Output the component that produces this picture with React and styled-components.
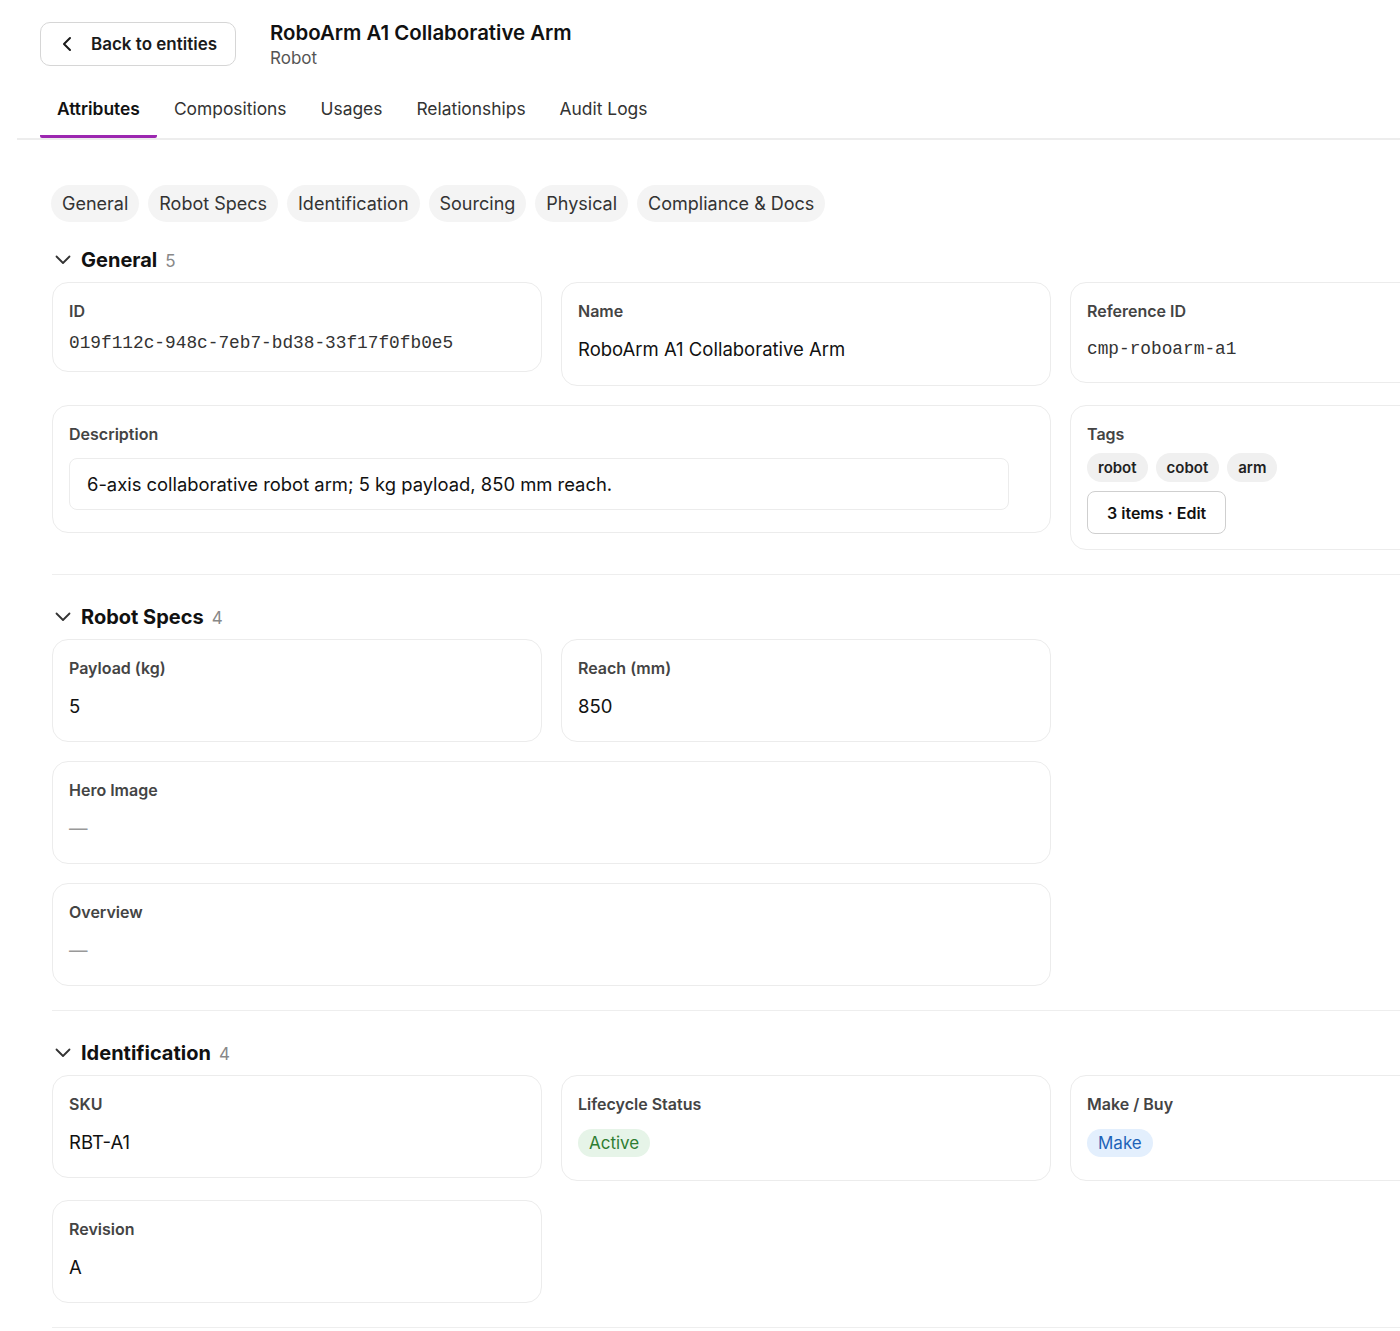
import React, { useState } from "react";
import styled, { createGlobalStyle } from "styled-components";
import { ChevronLeft } from "lucide-react";

const GlobalStyle = createGlobalStyle`
  body {
    margin: 0;
    background: #fff;
    font-family: Inter, "Noto Sans", sans-serif;
    color: #1a1a1a;
    overflow-x: hidden;
  }
  * { box-sizing: border-box; }
`;

const tabs = ["Attributes", "Compositions", "Usages", "Relationships", "Audit Logs"];
const groups = ["General", "Robot Specs", "Identification", "Sourcing", "Physical", "Compliance & Docs"];

const Page = styled.div`
  padding: 22px 0 0 40px;
`;

const Header = styled.header`
  display: flex;
  align-items: flex-start;
  gap: 34px;
`;

const BackButton = styled.button`
  display: flex;
  align-items: center;
  gap: 12px;
  height: 44px;
  padding: 0 18px 0 14px;
  border: 1px solid #d6d6d6;
  border-radius: 10px;
  background: #fff;
  font-family: inherit;
  font-size: 17px;
  font-weight: 600;
  color: #1a1a1a;
  cursor: pointer;
`;

const TitleBlock = styled.div`
  margin-top: -1px;
`;

const Title = styled.h1`
  margin: 0;
  font-size: 20.4px;
  line-height: 24px;
  font-weight: 600;
  color: #111;
`;

const Subtitle = styled.div`
  margin-top: 1px;
  font-size: 17px;
  line-height: 24px;
  color: #555;
`;

const TabBar = styled.nav`
  display: flex;
  margin: 14px 0 0 -23px;
  padding-left: 23px;
  border-bottom: 2px solid #ededed;
`;

const Tab = styled.button`
  padding: 14px 17px 15px;
  border: 0;
  border-bottom: 3px solid ${(p) => (p.$active ? "#9c27b0" : "transparent")};
  border-radius: 2px;
  background: none;
  font-family: inherit;
  font-size: 17.4px;
  line-height: 22px;
  font-weight: ${(p) => (p.$active ? 600 : 400)};
  color: ${(p) => (p.$active ? "#111" : "#333")};
  cursor: pointer;
`;

const Content = styled.div`
  padding: 45px 0 0 12px;
`;

const GroupNav = styled.div`
  display: flex;
  gap: 9px;
  margin-left: -1px;
`;

const GroupPill = styled.button`
  height: 37px;
  padding: 0 11px;
  border: 0;
  border-radius: 19px;
  background: #f4f4f4;
  font-family: inherit;
  font-size: 18px;
  color: #333;
  cursor: pointer;
`;

const Section = styled.section`
  margin-top: ${(p) => (p.$first ? "24px" : "28px")};
`;

const SectionHead = styled.div`
  display: flex;
  align-items: center;
  gap: 10px;
  height: 28px;
  margin-bottom: 8px;
  padding-left: 3px;
  svg { color: #333; }
`;

const SectionTitle = styled.h2`
  margin: 0;
  font-size: 20px;
  font-weight: 700;
  color: #111;
  span {
    margin-left: 8px;
    font-size: 17px;
    font-weight: 400;
    color: #888;
  }
`;

const Grid = styled.div`
  display: grid;
  grid-template-columns: repeat(3, 490px);
  gap: 19px;
  align-items: start;
`;

const Card = styled.div`
  grid-column: span ${(p) => p.$span || 1};
  padding: 18px 16px ${(p) => p.$pb || 21}px;
  border: 1px solid #ececec;
  border-radius: 16px;
  background: #fff;
`;

const Label = styled.div`
  font-size: 16px;
  line-height: 20px;
  font-weight: 600;
  color: #444;
`;

const Value = styled.div`
  margin-top: 14px;
  font-size: 18.5px;
  line-height: 28px;
  color: ${(p) => (p.$empty ? "#999" : "#111")};
`;

const Mono = styled.div`
  margin-top: ${(p) => p.$mt}px;
  font-family: "Liberation Mono", "DejaVu Sans Mono", monospace;
  font-size: 17.8px;
  line-height: ${(p) => p.$lh}px;
  color: #333;
`;

const TextBox = styled.div`
  width: calc(100% - 25px);
  margin-top: 14px;
  padding: 0 17px;
  height: 52px;
  display: flex;
  align-items: center;
  border: 1px solid #ececec;
  border-radius: 8px;
  font-size: 18.4px;
  color: #111;
`;

const ChipRow = styled.div`
  display: flex;
  gap: 8px;
  margin-top: 9px;
`;

const Chip = styled.span`
  height: 29px;
  padding: 0 11px;
  display: inline-flex;
  align-items: center;
  border-radius: 15px;
  background: #f0f0f0;
  font-size: 15px;
  font-weight: 600;
  color: #222;
`;

const EditButton = styled.button`
  margin-top: 9px;
  height: 43px;
  padding: 0 19px;
  border: 1px solid #cfcfcf;
  border-radius: 8px;
  background: #fff;
  font-family: inherit;
  font-size: 16px;
  font-weight: 600;
  color: #111;
`;

const BadgeRow = styled.div`
  display: flex;
  margin-top: 15px;
`;

const Badge = styled.span`
  display: inline-flex;
  align-items: center;
  height: 28px;
  padding: 0 11px;
  border-radius: 14px;
  font-size: 17px;
  background: ${(p) => (p.$tone === "green" ? "#e6f4e8" : "#e3effd")};
  color: ${(p) => (p.$tone === "green" ? "#2e7d32" : "#1e63b8")};
`;

const Divider = styled.hr`
  margin: 24px 0 0;
  border: 0;
  border-top: 1px solid #eeeeee;
  width: 1400px;
`;

function Chevron() {
  return (
    <svg width="16" height="10" viewBox="0 0 16 10" fill="none">
      <polyline
        points="1.5,1.5 8,8 14.5,1.5"
        stroke="currentColor"
        strokeWidth="1.8"
        strokeLinecap="round"
        strokeLinejoin="round"
      />
    </svg>
  );
}

function Field({ label, children, span, pb }) {
  return (
    <Card $span={span} $pb={pb}>
      <Label>{label}</Label>
      {children}
    </Card>
  );
}

function Group({ title, count, first, children }) {
  return (
    <Section $first={first}>
      <SectionHead>
        <Chevron />
        <SectionTitle>
          {title}
          <span>{count}</span>
        </SectionTitle>
      </SectionHead>
      <Grid>{children}</Grid>
      <Divider />
    </Section>
  );
}

export default function App() {
  const [tab, setTab] = useState("Attributes");

  return (
    <Page>
      <GlobalStyle />
      <Header>
        <BackButton>
          <ChevronLeft size={24} strokeWidth={2} />
          Back to entities
        </BackButton>
        <TitleBlock>
          <Title>RoboArm A1 Collaborative Arm</Title>
          <Subtitle>Robot</Subtitle>
        </TitleBlock>
      </Header>

      <TabBar>
        {tabs.map((t) => (
          <Tab key={t} $active={t === tab} onClick={() => setTab(t)}>
            {t}
          </Tab>
        ))}
      </TabBar>

      <Content>
        <GroupNav>
          {groups.map((g) => (
            <GroupPill key={g}>{g}</GroupPill>
          ))}
        </GroupNav>

        <Group title="General" count={5} first>
          <Field label="ID" pb={17}>
            <Mono $mt={11} $lh={22}>019f112c-948c-7eb7-bd38-33f17f0fb0e5</Mono>
          </Field>
          <Field label="Name" pb={22}>
            <Value>RoboArm A1 Collaborative Arm</Value>
          </Field>
          <Field label="Reference ID" pb={19}>
            <Mono $mt={14} $lh={28}>cmp-roboarm-a1</Mono>
          </Field>
          <Field label="Description" span={2} pb={22}>
            <TextBox>6-axis collaborative robot arm; 5 kg payload, 850 mm reach.</TextBox>
          </Field>
          <Field label="Tags" pb={15}>
            <ChipRow>
              <Chip>robot</Chip>
              <Chip>cobot</Chip>
              <Chip>arm</Chip>
            </ChipRow>
            <EditButton>3 items · Edit</EditButton>
          </Field>
        </Group>

        <Group title="Robot Specs" count={4}>
          <Field label="Payload (kg)">
            <Value>5</Value>
          </Field>
          <Field label="Reach (mm)">
            <Value>850</Value>
          </Field>
          <Field label="Hero Image" span={2}>
            <Value $empty>—</Value>
          </Field>
          <Field label="Overview" span={2}>
            <Value $empty>—</Value>
          </Field>
        </Group>

        <Group title="Identification" count={4}>
          <Field label="SKU">
            <Value>RBT-A1</Value>
          </Field>
          <Field label="Lifecycle Status" pb={23}>
            <BadgeRow>
              <Badge $tone="green">Active</Badge>
            </BadgeRow>
          </Field>
          <Field label="Make / Buy" pb={23}>
            <BadgeRow>
              <Badge $tone="blue">Make</Badge>
            </BadgeRow>
          </Field>
          <Field label="Revision">
            <Value>A</Value>
          </Field>
        </Group>
      </Content>
    </Page>
  );
}
